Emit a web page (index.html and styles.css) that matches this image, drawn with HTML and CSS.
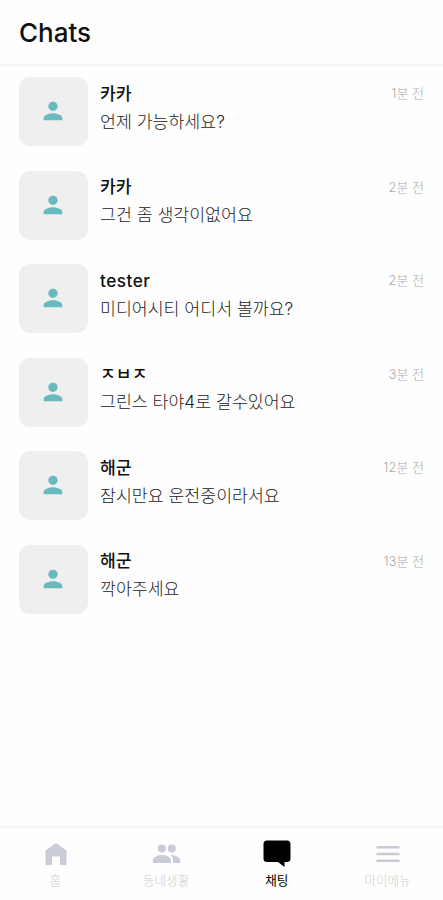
FILE: index.html
```html
<!DOCTYPE html>
<html lang="ko">
<head>
<meta charset="utf-8">
<title>Chats</title>
<link rel="stylesheet" href="styles.css">
</head>
<body>
<svg class="defs" aria-hidden="true"><symbol id="person" viewBox="0 0 24 24"><path d="M12 12c2.210 0 4-1.790 4-4s-1.790-4-4-4-4 1.790-4 4 1.790 4 4 4zm0 2c-2.670 0-8 1.340-8 4v2h16v-2c0-2.660-5.330-4-8-4z"/></symbol></svg>
<div class="app">
  <header class="header"><h1>Chats</h1></header>
  <main class="list">
    <article class="chat"><div class="avatar"><svg><use href="#person"/></svg></div><div class="body"><h2>카카</h2><p>언제 가능하세요?</p></div><time>1분 전</time></article>
    <article class="chat"><div class="avatar"><svg><use href="#person"/></svg></div><div class="body"><h2>카카</h2><p>그건 좀 생각이없어요</p></div><time>2분 전</time></article>
    <article class="chat"><div class="avatar"><svg><use href="#person"/></svg></div><div class="body"><h2 class="latin">tester</h2><p>미디어시티 어디서 볼까요?</p></div><time>2분 전</time></article>
    <article class="chat"><div class="avatar"><svg><use href="#person"/></svg></div><div class="body"><h2>ㅈㅂㅈ</h2><p>그린스 타야4로 갈수있어요</p></div><time>3분 전</time></article>
    <article class="chat"><div class="avatar"><svg><use href="#person"/></svg></div><div class="body"><h2>해군</h2><p>잠시만요 운전중이라서요</p></div><time>12분 전</time></article>
    <article class="chat"><div class="avatar"><svg><use href="#person"/></svg></div><div class="body"><h2>해군</h2><p>깍아주세요</p></div><time>13분 전</time></article>
  </main>
  <nav class="tabs">
    <a class="tab"><svg viewBox="0 0 28 28"><path d="M4.500 25V10.500L15 3l10.500 7.500V25H19v-8.500h-8V25z"/></svg><span>홈</span></a>
    <a class="tab"><svg viewBox="0 0 28 28"><circle cx="9.800" cy="8.600" r="4"/><circle cx="19.800" cy="8.600" r="4"/><path d="M.8 23v-2.800c0-3.200 5.500-5.200 9-5.200s9.200 2 9.200 5.200V23z"/><path d="M18.500 15c4.500 0 9.500 2 9.500 5.200V23h-7v-2.800c0-2.200-1-3.900-2.500-5.200z"/></svg><span>동네생활</span></a>
    <a class="tab active"><svg viewBox="0 0 28 28"><path d="M4 .5h20a3.500 3.500 0 0 1 3.500 3.500v14.500a3.500 3.500 0 0 1-3.500 3.500h-2.500v5L15 22H4a3.500 3.500 0 0 1-3.500-3.500V4A3.500 3.500 0 0 1 4 .5z"/></svg><span>채팅</span></a>
    <a class="tab"><svg viewBox="0 0 28 28"><path d="M2.500 6h23v2.500h-23zM2.500 12.700h23v2.500h-23zM2.500 19.400h23v2.500h-23z"/></svg><span>마이메뉴</span></a>
  </nav>
</div>
</body>
</html>
```
FILE: styles.css
```css
* { box-sizing: border-box; }
body, h1, h2, p { margin: 0; }
body {
  background: #fefefe;
  color: #111;
  font-family: Inter, "Noto Sans CJK KR", sans-serif;
}
.defs { display: none; }
.app { height: 900px; display: flex; flex-direction: column; overflow: hidden; }
.header {
  height: 66px;
  flex: none;
  padding: 0 19px;
  border-bottom: 2px solid #f6f6f6;
}
h1 { font-size: 26px; font-weight: 500; line-height: 65px; }
.list { flex: 1; }
.chat {
  height: 93.6px;
  padding: 11px 19px 0;
  display: flex;
  align-items: flex-start;
  border-bottom: 1px solid #fcfcfc;
}
.avatar {
  width: 69px;
  height: 69px;
  margin-right: 12px;
  padding: 0 1px 1px 0;
  border-radius: 11px;
  background: #efefef;
  display: flex;
  align-items: center;
  justify-content: center;
}
.avatar svg { width: 28px; height: 28px; fill: #68babf; }
.body { flex: 1; padding-top: 2.500px; white-space: nowrap; }
h2 { font-size: 17.200px; font-weight: 500; line-height: 28px; }
.latin { letter-spacing: 0.500px; }
.body p {
  font-size: 17.300px;
  font-weight: 300;
  line-height: 28px;
  color: #222;
}
time { padding-top: 6px; font-size: 13px; font-weight: 300; line-height: 20px; color: #aaa; white-space: nowrap; }
.tabs {
  height: 74px;
  flex: none;
  display: flex;
  border-top: 2px solid #f7f7f7;
}
.tab {
  flex: 1;
  padding-top: 12px;
  display: flex;
  flex-direction: column;
  align-items: center;
  color: #cfcfd3;
  font-size: 12.600px;
  font-weight: 300;
  line-height: 18px;
}
.tab svg { width: 28px; height: 28px; flex: none; margin-bottom: 4px; fill: #c9ccd6; }
.active { color: #000; font-weight: 400; }
.active svg { fill: #000; }
```
